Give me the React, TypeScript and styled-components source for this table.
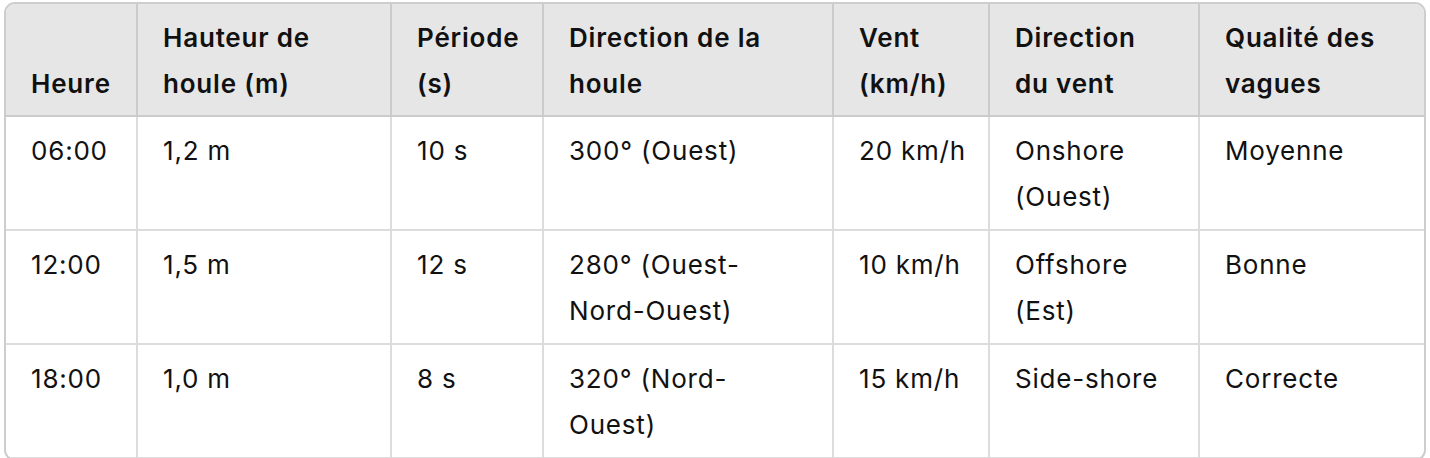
import {FC} from 'react'
import styled, {createGlobalStyle} from 'styled-components'

const GlobalStyle = createGlobalStyle`
  html, body {
    margin: 0;
    padding: 0;
    background: #ffffff;
  }
  body {
    font-family: 'Inter', 'Noto Sans', sans-serif;
    color: #111111;
  }
`

type Row = {
    heure: string
    hauteur: string
    periode: string
    direction: string
    vent: string
    directionVent: string
    qualite: string
}

const rows: Row[] = [
    {heure: '06:00', hauteur: '1,2 m', periode: '10 s', direction: '300° (Ouest)', vent: '20 km/h', directionVent: 'Onshore (Ouest)', qualite: 'Moyenne'},
    {heure: '12:00', hauteur: '1,5 m', periode: '12 s', direction: '280° (Ouest-Nord-Ouest)', vent: '10 km/h', directionVent: 'Offshore (Est)', qualite: 'Bonne'},
    {heure: '18:00', hauteur: '1,0 m', periode: '8 s', direction: '320° (Nord-Ouest)', vent: '15 km/h', directionVent: 'Side-shore', qualite: 'Correcte'},
]

const columns = [
    {label: 'Heure', width: 131},
    {label: 'Hauteur de houle (m)', width: 254},
    {label: 'Période (s)', width: 152},
    {label: 'Direction de la houle', width: 290},
    {label: 'Vent (km/h)', width: 156},
    {label: 'Direction du vent', width: 210},
    {label: 'Qualité des vagues', width: 0},
]

const App: FC = () => {
    return (
        <Page>
            <GlobalStyle/>
            <Frame>
                <Table>
                    <colgroup>
                        {columns.map((c) => (
                            <col key={c.label} style={c.width ? {width: c.width} : undefined}/>
                        ))}
                    </colgroup>
                    <thead>
                        <tr>
                            {columns.map((c) => (
                                <Th key={c.label}>{c.label}</Th>
                            ))}
                        </tr>
                    </thead>
                    <tbody>
                        {rows.map((r) => (
                            <tr key={r.heure}>
                                <Td>{r.heure}</Td>
                                <Td>{r.hauteur}</Td>
                                <Td>{r.periode}</Td>
                                <Td>{r.direction}</Td>
                                <Td $nowrap>{r.vent}</Td>
                                <Td>{r.directionVent}</Td>
                                <Td>{r.qualite}</Td>
                            </tr>
                        ))}
                    </tbody>
                </Table>
            </Frame>
        </Page>
    )
}

const Page = styled.div`
  padding: 2px 4px 0 4px;
`
const Frame = styled.div`
  border: 2px solid #cdcdcd;
  border-radius: 11px;
  overflow: hidden;
`
const Table = styled.table`
  width: 100%;
  table-layout: fixed;
  border-collapse: collapse;
  font-size: 26px;
  line-height: 46px;
  letter-spacing: 0.8px;
`
const Th = styled.th`
  background: #e6e6e6;
  text-align: left;
  vertical-align: bottom;
  font-weight: 600;
  padding: 11px 22px 8px 25px;
  border-right: 2px solid #cbcbcb;
  border-bottom: 2px solid #cbcbcb;
  &:last-child {
    border-right: none;
  }
`
const Td = styled.td<{$nowrap?: boolean}>`
  text-align: left;
  vertical-align: top;
  font-weight: 400;
  white-space: ${(p) => (p.$nowrap ? 'nowrap' : 'normal')};
  padding: 11px 22px 9px 25px;
  border-right: 2px solid #dcdcdc;
  border-bottom: 2px solid #dcdcdc;
  &:last-child {
    border-right: none;
  }
`

export default App
